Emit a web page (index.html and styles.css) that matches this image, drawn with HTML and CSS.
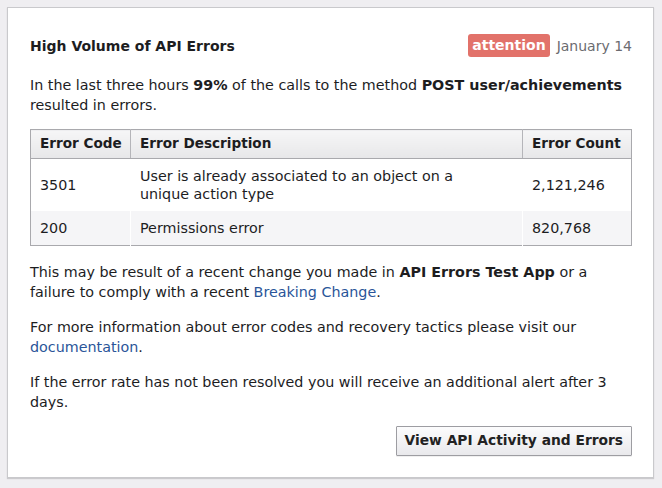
FILE: index.html
```html
<!DOCTYPE html>
<html lang="en">
<head>
<meta charset="UTF-8" />
<title>API Errors Alert</title>
<link rel="stylesheet" href="styles.css">
</head>
<body>

<div class="alert-card">
  <div class="alert-head">
    <h2 class="alert-title">High Volume of API Errors</h2>
    <div class="alert-meta">
      <span class="badge">attention</span>
      <span class="alert-date">January 14</span>
    </div>
  </div>

  <p class="intro">In the last three hours <b>99%</b> of the calls to the method <b>POST user/achievements</b> resulted in errors.</p>

  <table class="error-table">
    <colgroup>
      <col class="col-code">
      <col>
      <col class="col-count">
    </colgroup>
    <thead>
      <tr>
        <th>Error Code</th>
        <th>Error Description</th>
        <th>Error Count</th>
      </tr>
    </thead>
    <tbody>
      <tr>
        <td>3501</td>
        <td>User is already associated to an object on a<br>unique action type</td>
        <td>2,121,246</td>
      </tr>
      <tr class="alt">
        <td>200</td>
        <td>Permissions error</td>
        <td>820,768</td>
      </tr>
    </tbody>
  </table>

  <p>This may be result of a recent change you made in <b>API Errors Test App</b> or a failure to comply with a recent <a href="#">Breaking Change</a>.</p>

  <p>For more information about error codes and recovery tactics please visit our <a href="#">documentation</a>.</p>

  <p class="last">If the error rate has not been resolved you will receive an additional alert after 3 days.</p>

  <div class="alert-actions">
    <button class="btn">View API Activity and Errors</button>
  </div>
</div>

</body>
</html>
```

FILE: styles.css
```css
body {
  margin: 0;
  background: #efeef1;
  padding: 7px 8px 11px 7px;
  font-family: "DejaVu Sans", "Lucida Grande", sans-serif;
  font-size: 14.3px;
  color: #1d1d1f;
}

.alert-card {
  background: #fff;
  border: 1px solid #c9c9cc;
  box-shadow: 0 1px 1px rgba(0, 0, 0, 0.15);
  padding: 26px 21px 21px 22px;
}

.alert-head {
  display: flex;
  justify-content: space-between;
  align-items: center;
  margin-bottom: 18px;
}

.alert-title {
  margin: 0;
  font-size: 14px;
  line-height: 20px;
  font-weight: bold;
}

.alert-meta {
  display: flex;
  align-items: center;
  gap: 7px;
}

.badge {
  background: #e2726a;
  color: #fff;
  font-weight: bold;
  font-size: 14px;
  line-height: 18px;
  border-radius: 3px;
  padding: 2px 4px 3px;
}

.alert-date {
  color: #6b6b70;
  font-size: 14px;
}

p {
  margin: 0 0 15px;
  line-height: 20px;
}

p.intro {
  margin-bottom: 14px;
}

p.last {
  margin-bottom: 0;
}

a {
  color: #2a5599;
  text-decoration: none;
}

/* tabella errori */
.error-table {
  width: 100%;
  table-layout: fixed;
  border-collapse: collapse;
  border: 1px solid #a9a9ad;
  margin: 0 0 16px;
}

.error-table .col-code {
  width: 100px;
}

.error-table .col-count {
  width: 109px;
}

.error-table th {
  text-align: left;
  font-weight: bold;
  font-size: 13.6px;
  white-space: nowrap;
  padding: 4px 9px 5px;
  background: linear-gradient(#f6f6f7, #e7e7e9);
  border-bottom: 1px solid #a9a9ad;
  border-left: 1px solid #b5b5b9;
  line-height: 19px;
}

.error-table th:first-child {
  border-left: none;
}

.error-table td {
  padding: 8px 9px;
  line-height: 18px;
  vertical-align: middle;
}

.error-table td + td {
  border-left: 1px solid #fff;
}

.error-table tr.alt td {
  background: #f5f5f7;
}

.alert-actions {
  display: flex;
  justify-content: flex-end;
  margin-top: 14px;
}

.btn {
  font-family: inherit;
  font-size: 13.8px;
  line-height: 17px;
  font-weight: bold;
  color: #222;
  background: linear-gradient(#fcfcfd, #e9e9ec);
  border: 1px solid #9d9da2;
  border-radius: 1px;
  padding: 5px 8px 6px;
  box-shadow: 0 1px 0 rgba(0, 0, 0, 0.06);
}
```
